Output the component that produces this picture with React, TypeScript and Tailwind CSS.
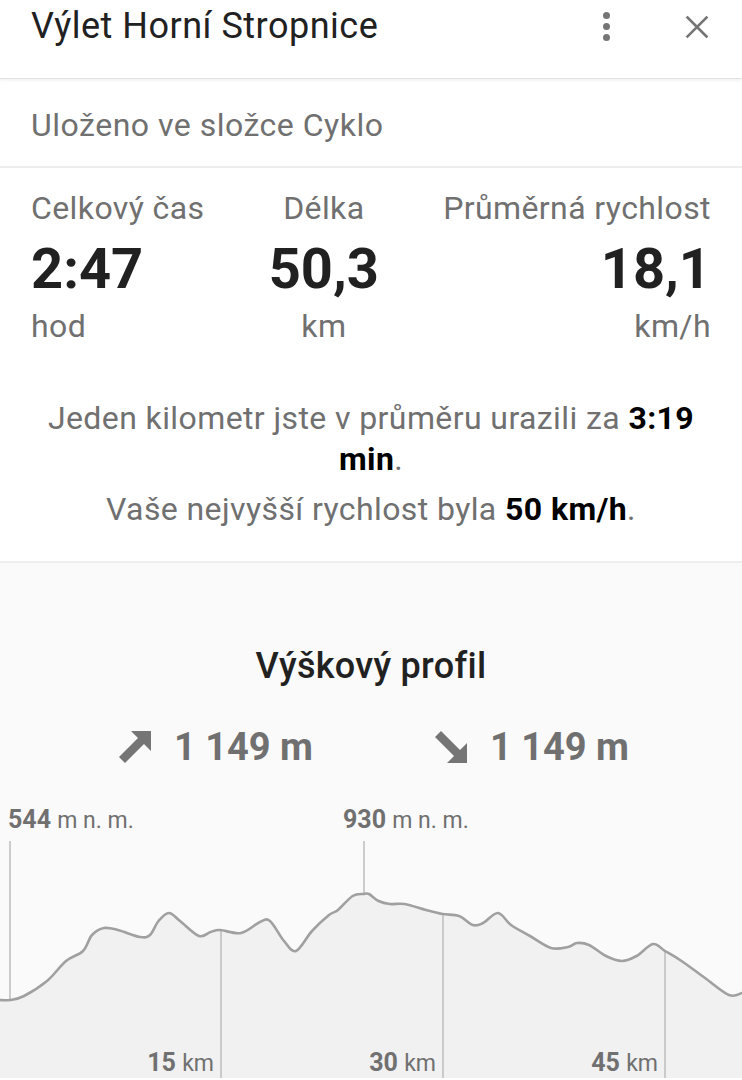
import React from 'react';

const profilePoints: [number, number][] = [
  [0, 202], [10, 202], [24, 198], [47, 183], [66, 163], [83, 153], [92, 137], [104, 130], [118, 132],
  [140, 139], [150, 137], [158.5, 123], [169, 115], [180, 123], [199, 138], [210.6, 134], [220, 132],
  [241, 135], [260, 124], [270, 123], [284, 143], [296, 153], [312, 133], [329, 117], [338, 112],
  [352.6, 98], [364, 96], [369, 96], [378.6, 103], [390, 106], [404.6, 106], [426, 112], [442.5, 116],
  [459, 118], [473, 127], [483, 125], [498, 115], [511, 127], [530, 138], [551, 150], [568, 149],
  [577, 145], [589, 147], [606, 158], [622, 163], [636.5, 158], [653, 146], [665, 153], [681.5, 163],
  [705, 180], [729, 197], [742, 195],
];

// vyhlazení křivky (catmull-rom -> bezier)
const smooth = (pts: [number, number][]) => {
  let d = `M${pts[0][0]} ${pts[0][1]}`;
  for (let i = 0; i < pts.length - 1; i++) {
    const p0 = pts[i - 1] || pts[i];
    const p1 = pts[i];
    const p2 = pts[i + 1];
    const p3 = pts[i + 2] || p2;
    const c1x = p1[0] + (p2[0] - p0[0]) / 6;
    const c1y = p1[1] + (p2[1] - p0[1]) / 6;
    const c2x = p2[0] - (p3[0] - p1[0]) / 6;
    const c2y = p2[1] - (p3[1] - p1[1]) / 6;
    d += ` C${c1x.toFixed(1)} ${c1y.toFixed(1)} ${c2x.toFixed(1)} ${c2y.toFixed(1)} ${p2[0]} ${p2[1]}`;
  }
  return d;
};

const linePath = smooth(profilePoints);
const areaPath = `${linePath} L742 280 L0 280 Z`;

const ArrowUp = () => (
  <svg width="32" height="32" viewBox="0 0 32 32" className="shrink-0">
    <path d="M12 0 H32 V20 L25 13 L6 32 L0 26 L19 7 Z" fill="#757575" />
  </svg>
);

const ArrowDown = () => (
  <svg width="32" height="32" viewBox="0 0 32 32" className="shrink-0">
    <path d="M12 32 H32 V12 L25 19 L6 0 L0 6 L19 25 Z" fill="#757575" />
  </svg>
);

const Stat = ({ label, value, unit, align }: { label: string; value: string; unit: string; align: string }) => (
  <div className={`flex flex-col ${align}`}>
    <span className="text-[32px] leading-[38px] tracking-[0.4px] text-[#707070]">{label}</span>
    <span className="mt-[10px] text-[56px] leading-[64px] font-bold text-[#212121]">{value}</span>
    <span className="mt-[6px] text-[32px] leading-[38px] tracking-[0.4px] text-[#707070]">{unit}</span>
  </div>
);

export default function App() {
  return (
    <div className="w-[742px] h-[1080px] overflow-hidden bg-white" style={{ fontFamily: 'Roboto, "Noto Sans", sans-serif' }}>
      {/* hlavička */}
      <header className="h-[79px] flex items-start pt-[5px] pl-[31px] pr-[33px] border-b border-[#e4e4e4] shadow-[0_1px_3px_rgba(0,0,0,0.08)]">
        <h1 className="flex-1 text-[36px] leading-[42px] tracking-[0.5px] text-[#212121]">Výlet Horní Stropnice</h1>
        <div className="flex items-start gap-[75px] pt-[6px]">
          <div className="flex flex-col gap-[4px] items-center pt-[0.5px]">
            <span className="w-[7px] h-[7px] rounded-full bg-[#757575]" />
            <span className="w-[7px] h-[7px] rounded-full bg-[#757575]" />
            <span className="w-[7px] h-[7px] rounded-full bg-[#757575]" />
          </div>
          <svg width="24" height="24" viewBox="0 0 24 24" className="mt-[4px]">
            <path d="M2.5 2.5 L21.5 21.5 M21.5 2.5 L2.5 21.5" stroke="#757575" strokeWidth="2.6" strokeLinecap="square" />
          </svg>
        </div>
      </header>

      <div className="h-[89px] pl-[31px] pt-[27px] border-b-2 border-[#eeeeee]">
        <span className="text-[32px] leading-[38px] tracking-[0.5px] text-[#707070]">Uloženo ve složce Cyklo</span>
      </div>

      {/* statistiky */}
      <section className="px-[31px] pt-[21px] pb-[31px] border-b-2 border-[#eeeeee]">
        <div className="flex justify-between">
          <Stat label="Celkový čas" value="2:47" unit="hod" align="items-start" />
          <Stat label="Délka" value="50,3" unit="km" align="items-center" />
          <Stat label="Průměrná rychlost" value="18,1" unit="km/h" align="items-end" />
        </div>
        <p className="mt-[53px] text-center text-[32px] leading-[41px] tracking-[0.4px] text-[#707070]">
          Jeden kilometr jste v průměru urazili za <b className="text-black font-bold">3:19</b>{' '}
          <b className="text-black font-bold">min</b>.
        </p>
        <p className="mt-[9px] text-center text-[32px] leading-[41px] tracking-[0.4px] text-[#707070]">
          Vaše nejvyšší rychlost byla <b className="text-black font-bold">50 km/h</b>.
        </p>
      </section>

      {/* výškový profil */}
      <section className="bg-[#fafafa] pt-[82px]">
        <h2 className="text-center text-[36px] leading-[42px] tracking-[0.3px] font-medium text-[#212121]">Výškový profil</h2>
        <div className="mt-[38px] pl-[6px] flex justify-center gap-[122px] text-[38px] leading-[44px] font-bold text-[#707070]">
          <div className="flex items-center gap-[23px]">
            <ArrowUp />
            <span>1 149 m</span>
          </div>
          <div className="flex items-center gap-[23px]">
            <ArrowDown />
            <span>1 149 m</span>
          </div>
        </div>

        <div className="relative mt-[29px] h-[280px]">
          <svg className="absolute inset-0" width="742" height="280" viewBox="0 0 742 280">
            <path d={areaPath} fill="#f1f1f1" />
            <line x1="10" y1="43" x2="10" y2="202" stroke="#bdbdbd" strokeWidth="1.5" />
            <line x1="364" y1="43" x2="364" y2="96" stroke="#bdbdbd" strokeWidth="1.5" />
            <line x1="221" y1="132" x2="221" y2="280" stroke="#bdbdbd" strokeWidth="1.5" />
            <line x1="443" y1="116" x2="443" y2="280" stroke="#bdbdbd" strokeWidth="1.5" />
            <line x1="665" y1="153" x2="665" y2="280" stroke="#bdbdbd" strokeWidth="1.5" />
            <path d={linePath} fill="none" stroke="#a0a0a0" strokeWidth="2.6" strokeLinejoin="round" />
          </svg>

          <div className="absolute left-[8px] top-[7px] text-[25px] leading-[30px] text-[#707070]">
            <b className="font-bold">544</b> <span className="text-[23px]">m n. m.</span>
          </div>
          <div className="absolute left-[343px] top-[7px] text-[25px] leading-[30px] text-[#707070]">
            <b className="font-bold">930</b> <span className="text-[23px]">m n. m.</span>
          </div>
          <div className="absolute right-[528px] top-[250px] text-[25px] leading-[30px] text-[#707070]">
            <b className="font-bold">15</b> <span className="text-[23px]">km</span>
          </div>
          <div className="absolute right-[306px] top-[250px] text-[25px] leading-[30px] text-[#707070]">
            <b className="font-bold">30</b> <span className="text-[23px]">km</span>
          </div>
          <div className="absolute right-[84px] top-[250px] text-[25px] leading-[30px] text-[#707070]">
            <b className="font-bold">45</b> <span className="text-[23px]">km</span>
          </div>
        </div>
      </section>
    </div>
  );
}
